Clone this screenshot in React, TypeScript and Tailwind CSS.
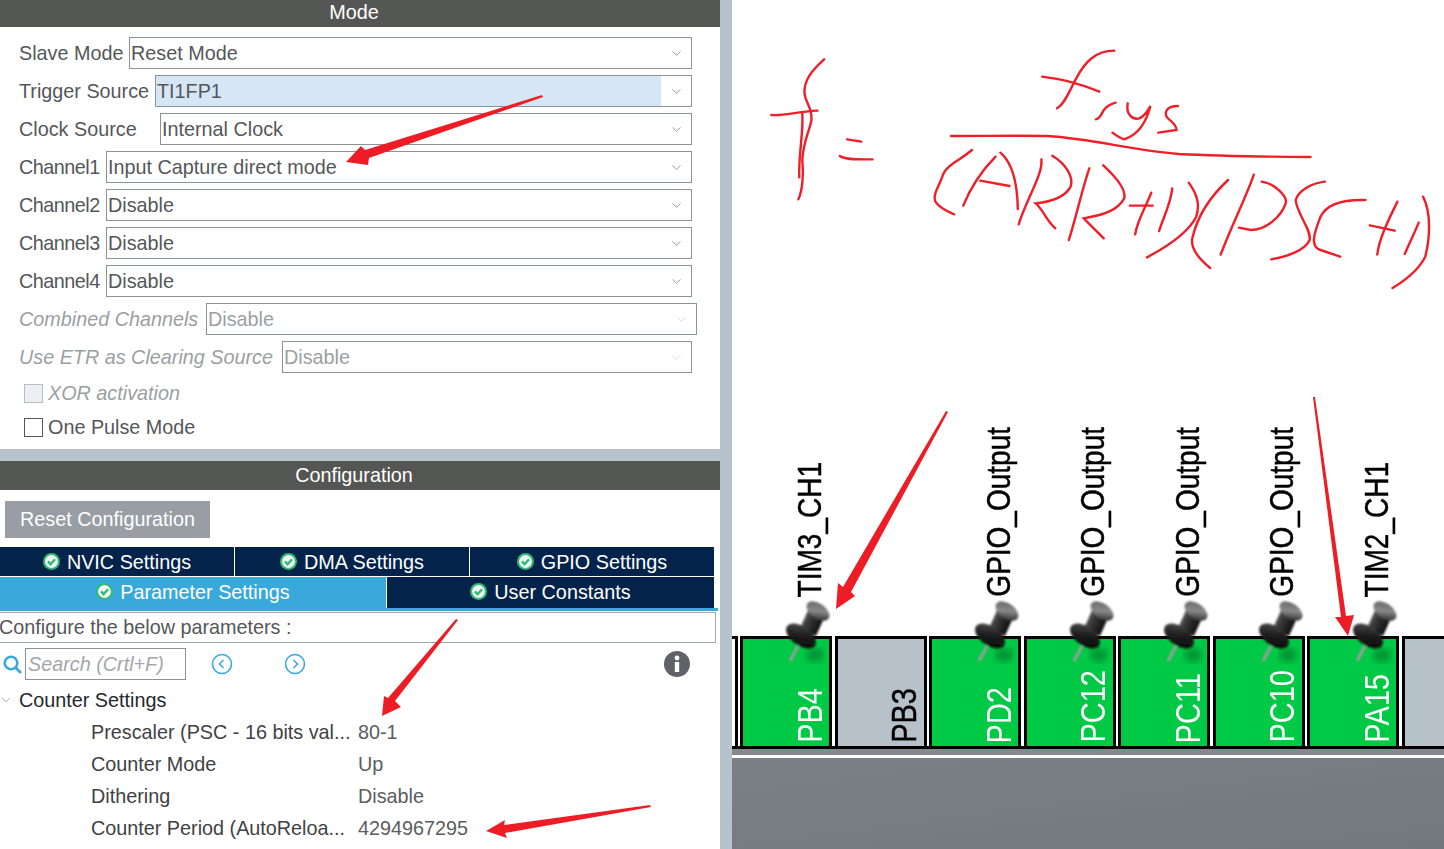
import React from 'react';
import { ChevronDown } from 'lucide-react';

const FONT = 'font-["Liberation_Sans",sans-serif]';

const selectRows = [
  { label: 'Slave Mode', value: 'Reset Mode', labelW: 'w-[110px]' },
  { label: 'Trigger Source', value: 'TI1FP1', labelW: 'w-[136px]', selected: true },
  { label: 'Clock Source', value: 'Internal Clock', labelW: 'w-[141px]' },
  { label: 'Channel1', value: 'Input Capture direct mode', labelW: 'w-[87px] tracking-[-0.5px]' },
  { label: 'Channel2', value: 'Disable', labelW: 'w-[87px] tracking-[-0.5px]' },
  { label: 'Channel3', value: 'Disable', labelW: 'w-[87px] tracking-[-0.5px]' },
  { label: 'Channel4', value: 'Disable', labelW: 'w-[87px] tracking-[-0.5px]' },
];

function SelectRow({ label, value, labelW, selected, disabled, wide }: any) {
  return (
    <div className={`flex items-center h-8 pl-[19px] ${wide ? 'pr-[23px]' : 'pr-[28px]'}`}>
      <span className={`${labelW} shrink-0 whitespace-nowrap ${disabled ? 'italic text-[#9a9fa3]' : 'text-[#54575a]'}`}>{label}</span>
      <div className={`flex-1 h-8 flex items-center border border-[#8c9398] ${disabled ? 'text-[#9a9fa3]' : 'text-[#54575a]'}`}>
        <span className={`flex-1 h-full flex items-center pl-px ${selected ? 'bg-[#d6e6f4]' : ''}`}>{value}</span>
        <span className="w-[30px] flex justify-center">
          <ChevronDown size={15} strokeWidth={1} className={disabled ? 'text-[#c0c4c7]' : 'text-[#5f6468]'} />
        </span>
      </div>
    </div>
  );
}

function CheckDot() {
  return (
    <svg width="17" height="17" viewBox="0 0 17 17" className="shrink-0">
      <circle cx="8.5" cy="8.5" r="8.5" fill="#2fbb72" />
      <circle cx="8.5" cy="8.5" r="6.4" fill="#f1f7f4" />
      <path d="M5 8.4l2.6 2.8 4.4-5" fill="none" stroke="#2fbb72" strokeWidth="2.4" />
    </svg>
  );
}

function Tab({ label, className }: { label: string; className: string }) {
  return (
    <div className={`flex items-center justify-center gap-[7px] text-white ${className}`}>
      <CheckDot />
      <span>{label}</span>
    </div>
  );
}

function ParamRow({ label, value }: { label: string; value: string }) {
  return (
    <div className="flex items-center h-8 pl-[91px]">
      <span className="w-[267px] text-[#3f4245] whitespace-nowrap">{label}</span>
      <span className="text-[#5a5d60]">{value}</span>
    </div>
  );
}

function Pin() {
  return (
    <svg width="70" height="80" viewBox="0 0 70 80" className="absolute left-[29px] top-[-45px]">
      <defs>
        <linearGradient id="pinNeck" x1="0" y1="0" x2="1" y2="0.6">
          <stop offset="0" stopColor="#9a9a9a" />
          <stop offset="0.45" stopColor="#3a3a3a" />
          <stop offset="1" stopColor="#0a0a0a" />
        </linearGradient>
        <linearGradient id="pinCap" x1="0" y1="0" x2="1" y2="1">
          <stop offset="0" stopColor="#5a5a5a" />
          <stop offset="0.5" stopColor="#8a8a8a" />
          <stop offset="1" stopColor="#111" />
        </linearGradient>
        <linearGradient id="pinCollar" x1="0" y1="0" x2="1" y2="1">
          <stop offset="0" stopColor="#555" />
          <stop offset="0.5" stopColor="#1c1c1c" />
          <stop offset="1" stopColor="#050505" />
        </linearGradient>
        <filter id="soft"><feGaussianBlur stdDeviation="0.8" /></filter>
        <filter id="shadowBlur"><feGaussianBlur stdDeviation="3.5" /></filter>
      </defs>
      <ellipse cx="43" cy="61" rx="9" ry="7" fill="#00702a" opacity="0.6" filter="url(#shadowBlur)" />
      <g filter="url(#soft)">
        <line x1="26" y1="52" x2="18" y2="67" stroke="#9a9f9b" strokeWidth="3.2" />
        <polygon points="37,14 52,24 44,42 28,34" fill="url(#pinNeck)" />
        <ellipse cx="46" cy="17" rx="13" ry="7.5" transform="rotate(35 46 17)" fill="url(#pinCap)" />
        <ellipse cx="29" cy="42" rx="17" ry="9.5" transform="rotate(35 29 42)" fill="url(#pinCollar)" />
      </g>
    </svg>
  );
}

const pins = [
  { name: 'PB4', signal: 'TIM3_CH1', on: true },
  { name: 'PB3', signal: '', on: false },
  { name: 'PD2', signal: 'GPIO_Output', on: true },
  { name: 'PC12', signal: 'GPIO_Output', on: true },
  { name: 'PC11', signal: 'GPIO_Output', on: true },
  { name: 'PC10', signal: 'GPIO_Output', on: true },
  { name: 'PA15', signal: 'TIM2_CH1', on: true },
];

function PinColumn({ name, signal, on }: { name: string; signal: string; on: boolean }) {
  return (
    <div className="w-[92px] shrink-0 flex flex-col">
      {signal && (
        <div className="h-[34px] pl-[55.5px] mb-[39px] flex items-end">
          <span className="[writing-mode:vertical-rl] [-webkit-text-stroke:0.4px_black] rotate-180 scale-x-120 text-[28px] leading-[28px] text-black whitespace-nowrap">{signal}</span>
        </div>
      )}
      <div className={`relative h-[110px] border-t-3 border-x-3 border-black flex items-end pl-[52.5px] pb-[3px] ${on ? 'bg-[#00c945]' : 'bg-[#b6c1c9]'}`}>
        {on && <Pin />}
        <span className={`[writing-mode:vertical-rl] rotate-180 scale-x-120 text-[29px] leading-[28px] whitespace-nowrap ${on ? 'text-white' : 'text-black [-webkit-text-stroke:0.4px_black]'}`}>{name}</span>
      </div>
    </div>
  );
}

export default function App() {
  return (
    <div className={`relative flex w-[1444px] h-[849px] overflow-hidden bg-white text-[19.8px] leading-6 ${FONT}`}>
      {/* left panel */}
      <div className="w-[720px] shrink-0 flex flex-col bg-white">
        <div className="h-[27px] bg-[#545654] text-white flex items-center justify-center pr-3 pb-[3px]">Mode</div>
        <div className="h-[422px] pt-[10px] flex flex-col gap-[6px]">
          {selectRows.map((r) => (
            <SelectRow key={r.label} {...r} />
          ))}
          <SelectRow label="Combined Channels" value="Disable" labelW="w-[187px]" disabled wide />
          <SelectRow label="Use ETR as Clearing Source" value="Disable" labelW="w-[263px]" disabled />
          <div className="flex items-center gap-[5px] pl-[24px] h-7">
            <span className="w-[19px] h-[19px] border border-[#b5bcc2] bg-[#edf0f3]" />
            <span className="italic text-[#9a9fa3]">XOR activation</span>
          </div>
          <div className="flex items-center gap-[5px] pl-[24px] h-7">
            <span className="w-[19px] h-[19px] border border-[#54575a]" />
            <span className="text-[#54575a]">One Pulse Mode</span>
          </div>
        </div>
        <div className="h-3 bg-[#b7c3ca]" />
        <div className="h-[29px] bg-[#545654] text-white flex items-center justify-center pr-3 pb-[1px]">Configuration</div>
        <div className="flex-1 flex flex-col">
          <div className="h-[57px] pt-[11px] pl-[5px]">
            <div className="w-[205px] h-[37px] pb-[2px] bg-[#989ea3] text-white flex items-center justify-center">Reset Configuration</div>
          </div>
          <div className="w-[714px] flex h-[29px] gap-px">
            <Tab label="NVIC Settings" className="w-[234px] bg-[#03234b]" />
            <Tab label="DMA Settings" className="w-[234px] bg-[#03234b]" />
            <Tab label="GPIO Settings" className="flex-1 bg-[#03234b]" />
          </div>
          <div className="w-[714px] flex h-[31px] gap-px mt-px">
            <Tab label="Parameter Settings" className="w-[386px] pb-[2px] bg-[#39a9dc]" />
            <Tab label="User Constants" className="flex-1 pb-[2px] bg-[#03234b]" />
          </div>
          <div className="w-[718px] h-[3px] bg-[#39a9dc]" />
          <div className="w-[717px] h-[31px] mt-px pb-[2px] border border-l-0 border-[#a4a9ad] flex items-center -ml-px text-[#54575a] whitespace-nowrap">
            Configure the below parameters :
          </div>
          <div className="h-[38px] flex items-center mt-[2px] pl-[3px]">
            <svg width="19" height="19" viewBox="0 0 19 19" className="shrink-0" fill="none" stroke="#39a9dc" strokeWidth="2.6"><circle cx="8" cy="8" r="6.3" /><path d="M12.5 12.5l5.5 5.5" /></svg>
            <div className="w-[161px] h-8 ml-[3px] border border-[#8c9398] flex items-center pl-[2px] italic text-[#a3a7ab]">Search (Crtl+F)</div>
            <svg width="22" height="22" viewBox="0 0 22 22" className="ml-[25px]"><circle cx="11" cy="11" r="9.5" fill="none" stroke="#39a9dc" strokeWidth="1.6" /><path d="M12.5 7l-4 4 4 4" fill="none" stroke="#39a9dc" strokeWidth="1.6" /></svg>
            <svg width="22" height="22" viewBox="0 0 22 22" className="ml-[51px]"><circle cx="11" cy="11" r="9.5" fill="none" stroke="#39a9dc" strokeWidth="1.6" /><path d="M9.5 7l4 4-4 4" fill="none" stroke="#39a9dc" strokeWidth="1.6" /></svg>
            <svg width="28" height="28" viewBox="0 0 28 28" className="ml-[357px]">
              <circle cx="14" cy="14" r="13" fill="#5f6367" />
              <circle cx="14" cy="8" r="2.4" fill="#fff" />
              <rect x="11.8" y="12" width="4.4" height="10" fill="#fff" />
            </svg>
          </div>
          <div className="flex items-center h-8 mt-[1px]">
            <span className="w-[19px] flex justify-center -ml-[4px] mr-[4px]"><ChevronDown size={14} strokeWidth={1} className="text-[#6b7075]" /></span>
            <span className="text-[#26292c]">Counter Settings</span>
          </div>
          <ParamRow label="Prescaler (PSC - 16 bits val..." value="80-1" />
          <ParamRow label="Counter Mode" value="Up" />
          <ParamRow label="Dithering" value="Disable" />
          <ParamRow label="Counter Period (AutoReloa..." value="4294967295" />
        </div>
      </div>

      <div className="w-3 shrink-0 bg-[#b7c3ca]" />

      {/* right: pin strip */}
      <div className="flex-1 flex flex-col min-w-0">
        <div className="h-[746px] flex items-end overflow-hidden gap-[2.5px]">
          <div className="w-[5.5px] shrink-0 h-[110px] border-t-3 border-r-3 border-black" />
          {pins.map((p) => (
            <PinColumn key={p.name} {...p} />
          ))}
          <div className="w-[92px] shrink-0 h-[110px] border-t-3 border-l-3 border-black bg-[#b6c1c9]" />
        </div>
        <div className="h-[3px] bg-black" />
        <div className="h-[6px] bg-[#85898d]" />
        <div className="h-[3px] bg-white" />
        <div className="flex-1 bg-gradient-to-br from-[#7b8084] to-[#73787c]" />
      </div>

      {/* handwritten formula over the canvas */}
      <svg className="absolute left-[760px] top-[40px] w-[684px] h-[260px]" viewBox="0 0 1568 780" preserveAspectRatio="none" fill="none" stroke="#f01e28" strokeLinecap="round">
        {[
          'M147 58C120 90 100 120 102 160C104 190 120 200 118 240C112 280 100 300 97 360C100 400 98 450 88 478',
          'M97 222C100 280 88 340 90 412',
          'M26 225C60 228 80 215 132 212',
          'M200 298L232 305',
          'M183 348C195 360 225 358 258 358',
          'M812 32C770 32 745 65 725 115C710 150 700 190 681 205',
          'M647 110C690 118 720 125 778 155',
          'M770 238C790 232 775 205 815 188',
          'M843 190C838 225 855 240 870 235C885 225 890 210 895 198C885 250 865 285 835 298C825 295 815 285 808 278',
          'M958 198C930 198 925 220 935 235C950 250 955 262 955 270L913 278',
          'M438 288C520 288 600 286 660 288C760 296 850 330 960 342C1050 348 1150 350 1262 351',
          'M486 330C460 360 425 375 418 410C410 440 395 465 402 485C412 505 430 515 445 523',
          'M540 350C510 390 485 435 466 497',
          'M551 338C580 370 590 430 591 507',
          'M505 422L572 438',
          'M645 358C650 400 610 480 593 553',
          'M670 347C700 370 720 410 712 440C700 470 670 485 632 490C650 510 655 540 677 565',
          'M755 385C740 440 725 530 708 600',
          'M787 376C815 410 840 450 835 475C820 510 790 525 742 535L788 595',
          'M848 497L900 497',
          'M897 458C885 500 865 540 860 583',
          'M945 445C942 490 925 530 915 573',
          'M983 428C1000 460 1010 490 1000 530C985 570 940 615 887 652',
          'M1073 420C1040 460 1005 520 992 590C985 620 1000 650 1032 684',
          'M1132 404C1115 470 1080 560 1056 644',
          'M1150 425C1180 430 1210 470 1205 490C1195 530 1160 570 1125 570L1098 563',
          'M1295 425C1265 430 1235 450 1228 480C1230 520 1265 570 1260 600C1250 630 1210 650 1172 658',
          'M1388 480C1340 478 1300 490 1285 530C1270 580 1260 620 1285 630L1330 650',
          'M1398 556L1455 572',
          'M1461 485C1445 530 1420 590 1415 644',
          'M1510 548C1500 580 1485 620 1478 642',
          'M1520 470C1540 520 1535 600 1525 650C1510 690 1480 720 1450 744',
        ].map((d) => (
          <path key={d} d={d} strokeWidth="2.4" vectorEffect="non-scaling-stroke" />
        ))}
      </svg>

      {/* annotation arrows */}
      <svg className="absolute inset-0 w-[1444px] h-[849px] pointer-events-none" viewBox="0 0 1444 849" fill="#ee1c25">
        <polygon points="542,95 543,97 369,158 368,165 346,162 361,146 365,150" />
        <polygon points="456,619 458,620 395,701 401,707 382,716 384,696 388,698" />
        <polygon points="650,805 651,807 505,833 507,838 486,831 505,820 504,825" />
        <polygon points="946,411 948,412 851,592 855,596 836,609 838,583 843,587" />
        <polygon points="1313,397 1315,397 1346,616 1354,615 1348,636 1335,617 1341,617" />
      </svg>
    </div>
  );
}
